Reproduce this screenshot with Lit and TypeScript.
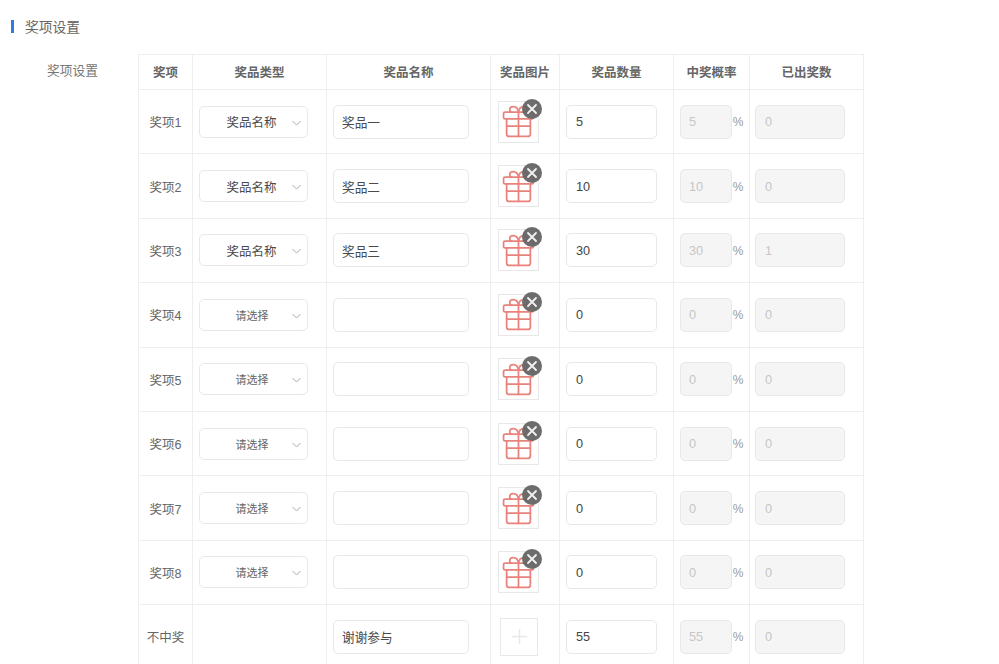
import { LitElement, html, css, svg } from "lit";
import { customElement } from "lit/decorators.js";

interface Row { label: string; type: string; name: string; qty: string; rate: string; out: string; img: boolean; }

const rows: Row[] = [
  { label: "奖项1", type: "奖品名称", name: "奖品一", qty: "5", rate: "5", out: "0", img: true },
  { label: "奖项2", type: "奖品名称", name: "奖品二", qty: "10", rate: "10", out: "0", img: true },
  { label: "奖项3", type: "奖品名称", name: "奖品三", qty: "30", rate: "30", out: "1", img: true },
  { label: "奖项4", type: "请选择", name: "", qty: "0", rate: "0", out: "0", img: true },
  { label: "奖项5", type: "请选择", name: "", qty: "0", rate: "0", out: "0", img: true },
  { label: "奖项6", type: "请选择", name: "", qty: "0", rate: "0", out: "0", img: true },
  { label: "奖项7", type: "请选择", name: "", qty: "0", rate: "0", out: "0", img: true },
  { label: "奖项8", type: "请选择", name: "", qty: "0", rate: "0", out: "0", img: true },
  { label: "不中奖", type: "", name: "谢谢参与", qty: "55", rate: "55", out: "0", img: false },
];

const gift = svg`<svg class="gift" viewBox="0 0 32 32" fill="none" stroke="#e8827b" stroke-width="1.700" stroke-linejoin="round" stroke-linecap="round">
  <rect x="1.500" y="7" width="29" height="6.500" rx="1.500"/>
  <path d="M4.500 13.500v14.500a2.500 2.500 0 0 0 2.500 2.500h18a2.500 2.500 0 0 0 2.500-2.500V13.500"/>
  <path d="M16 7v23.500M4.500 20.500h23"/>
  <path d="M16 7c-.5-3.500-2.500-5.500-5-5.500-2.200 0-3.500 1.300-3.500 3 0 1.200.6 2 1.500 2.500"/>
  <path d="M16 7c.5-3.500 2.500-5.500 5-5.500 2.200 0 3.500 1.300 3.500 3 0 1.200-.6 2-1.500 2.500"/>
</svg>`;

@customElement("app-root")
export class AppRoot extends LitElement {
  static styles = css`
    :host { display: block; width: 999px; height: 664px; overflow: hidden; background: #fff;
      font-family: "Microsoft YaHei", "Liberation Sans", "Noto Sans CJK SC", sans-serif; color: #666; font-size: 12.500px; }
    .title { display: flex; align-items: center; gap: 11px; height: 20px; padding: 16px 0 0 11px; font-size: 13.750px; color: #666; }
    .bar { width: 3px; height: 13px; background: #2f7de1; }
    .section { display: flex; align-items: flex-start; padding-top: 18px; }
    .sec-label { width: 138px; box-sizing: border-box; padding: 8px 40px 0 0; text-align: right; font-size: 12.750px; line-height: 17px; color: #777; }
    table { border-collapse: collapse; table-layout: fixed; width: 725px; }
    th, td { border: 1px solid #eeeeee; padding: 0; text-align: center; }
    th { height: 35px; font-size: 12.500px; font-weight: 700; color: #666; padding-bottom: 1px; box-sizing: border-box; }
    td { height: 63.4px; font-size: 12.500px; color: #666; }
    .cell { display: flex; align-items: center; padding-left: 6px; }
    .box { box-sizing: border-box; height: 34px; border: 1px solid #e8e8e8; border-radius: 5px; background: #fff;
      display: flex; align-items: center; font-size: 12.700px; color: #444; padding: 1px 0 0 9px; text-align: left; }
    .select { width: 109px; height: 32px; position: relative; padding: 0 4px 0 0; justify-content: center; }
    .select span { color: #4a4a4a; font-size: 12.500px; }
    .select.ph span { font-size: 11px; color: #666; padding-left: 1px; }
    .select svg { position: absolute; right: 6px; top: 13px; width: 9px; height: 6px; }
    .name { width: 136px; padding: 0 0 0 8px; color: #4a4a4a; }
    .qty { width: 91px; }
    .rate { width: 52px; background: #f5f5f5; color: #c6c6c6; padding-left: 8px; }
    .out { width: 90px; margin-left: -1px; background: #f5f5f5; color: #c6c6c6; }
    .pct { width: 12px; text-align: center; color: #999; font-size: 12px; padding-top: 1px; }
    .thumb { position: relative; box-sizing: border-box; width: 41px; height: 42px; border: 1px solid #e8e8e8; margin: 0 auto;
      left: -6.500px; display: flex; align-items: center; justify-content: center; }
    .gift { flex: none; width: 33px; height: 33px; }
    .close { position: absolute; top: -3px; right: -4px; width: 20px; height: 20px; border-radius: 50%; background: #666; opacity: .95; }
    .close svg { display: block; width: 20px; height: 20px; }
    .add { box-sizing: border-box; width: 38px; height: 38px; border: 1px solid #e8e8e8; margin: 0 auto; position: relative; left: -6px;
      display: flex; align-items: center; justify-content: center; }
    .add svg { width: 15px; height: 15px; }
  `;

  row(r: Row) {
    return html`<tr>
      <td>${r.label}</td>
      <td>${r.type
        ? html`<div class="cell"><div class="box select ${r.type === "请选择" ? "ph" : ""}"><span>${r.type}</span>
            <svg viewBox="0 0 9 6" fill="none" stroke="#aaa" stroke-width="1"><path d="M.5 1l4 4 4-4"/></svg></div></div>`
        : ""}</td>
      <td><div class="cell"><div class="box name">${r.name}</div></div></td>
      <td>${r.img
        ? html`<div class="thumb">${gift}<div class="close"><svg viewBox="0 0 20 20" stroke="#f2f2f2" stroke-width="1.800" stroke-linecap="round"><path d="M6 6l8 8M14 6l-8 8"/></svg></div></div>`
        : html`<div class="add"><svg viewBox="0 0 15 15" stroke="#e8e8e8" stroke-width="1.500"><path d="M7.500 0v15M0 7.500h15"/></svg></div>`}</td>
      <td><div class="cell"><div class="box qty">${r.qty}</div></div></td>
      <td><div class="cell"><div class="box rate">${r.rate}</div><span class="pct">%</span></div></td>
      <td><div class="cell"><div class="box out">${r.out}</div></div></td>
    </tr>`;
  }

  render() {
    return html`
      <div class="title"><i class="bar"></i><span>奖项设置</span></div>
      <div class="section">
        <div class="sec-label">奖项设置</div>
        <table>
          <colgroup><col style="width:54px"><col style="width:134px"><col style="width:164px"><col style="width:69px"><col style="width:114px"><col style="width:76px"><col style="width:114px"></colgroup>
          <thead><tr><th>奖项</th><th>奖品类型</th><th>奖品名称</th><th>奖品图片</th><th>奖品数量</th><th>中奖概率</th><th>已出奖数</th></tr></thead>
          <tbody>${rows.map((r) => this.row(r))}</tbody>
        </table>
      </div>`;
  }
}
